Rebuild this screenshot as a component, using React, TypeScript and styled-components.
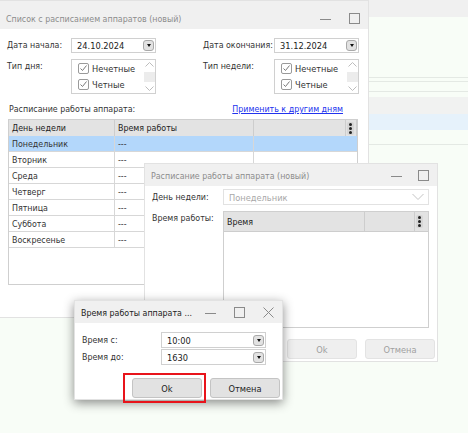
import React from "react";
import styled, { createGlobalStyle } from "styled-components";

const GlobalStyle = createGlobalStyle`
  html, body { margin: 0; padding: 0; }
  body {
    font-family: "DejaVu Sans Condensed", "DejaVu Sans", sans-serif;
    font-size: 8.8px;
    color: #333;
    background: #f8fdf7;
  }
`;

const Desktop = styled.div`
  position: relative;
  width: 468px;
  height: 433px;
  overflow: hidden;
  background: #f8fdf7;
`;

/* background application behind the dialogs */
const BackApp = styled.div`
  display: flex;
  flex-direction: column;
`;
const BackHeader = styled.div`
  height: 17px;
  background: #f0f0f0;
`;
const BackStripe = styled.div<{ $h: number; $bg?: string; $line?: boolean }>`
  height: ${(p) => p.$h}px;
  background: ${(p) => p.$bg || "transparent"};
  border-bottom: ${(p) => (p.$line ? "1px solid #e4e9e4" : "none")};
`;

/* windows */
const Window = styled.div<{ $x: number; $y: number; $w: number; $h: number; $shadow?: boolean }>`
  position: absolute;
  left: ${(p) => p.$x}px;
  top: ${(p) => p.$y}px;
  width: ${(p) => p.$w}px;
  height: ${(p) => p.$h}px;
  background: #fff;
  border: 1px solid #e2e2e2;
  box-sizing: border-box;
  display: flex;
  flex-direction: column;
  box-shadow: ${(p) => (p.$shadow ? "0 3px 10px rgba(0,0,0,0.45)" : "none")};
`;
const TitleBar = styled.div<{ $h: number; $muted?: boolean }>`
  height: ${(p) => p.$h}px;
  flex: none;
  background: #f0f0f0;
  display: flex;
  align-items: flex-end;
  justify-content: space-between;
  padding: 0 8px 5px 6px;
  box-sizing: border-box;
  color: ${(p) => (p.$muted ? "#8c8c8c" : "#222")};
`;
const TitleText = styled.span`
  white-space: nowrap;
`;
const TitleButtons = styled.div<{ $gap: number }>`
  display: flex;
  align-items: center;
  gap: ${(p) => p.$gap}px;
`;

const Minimize = () => (
  <svg width="11" height="11" viewBox="0 0 11 11">
    <path d="M0 6.5h11" stroke="#8a8a8a" strokeWidth="1" />
  </svg>
);
const Maximize = () => (
  <svg width="11" height="11" viewBox="0 0 11 11">
    <rect x="0.5" y="0.5" width="10" height="10" fill="none" stroke="#8a8a8a" />
  </svg>
);
const Close = () => (
  <svg width="11" height="11" viewBox="0 0 11 11">
    <path d="M0.5 0.5l10 10M10.5 0.5l-10 10" stroke="#8a8a8a" />
  </svg>
);

/* form parts */
const Label = styled.div<{ $lh?: number }>`
  line-height: ${(p) => p.$lh || 15}px;
  white-space: nowrap;
  color: #333;
`;
const Field = styled.div<{ $h?: number; $disabled?: boolean }>`
  height: ${(p) => p.$h || 15}px;
  border: 1px solid ${(p) => (p.$disabled ? "#e2e2e2" : "#d0d0d0")};
  box-sizing: border-box;
  display: flex;
  align-items: center;
  justify-content: space-between;
  padding: 0 1px 0 5px;
  background: #fff;
  font-size: 9.2px;
  color: ${(p) => (p.$disabled ? "#a8a8a8" : "#222")};
  white-space: nowrap;
`;
const DropButton = styled.span`
  width: 11px;
  height: 11px;
  border: 1px solid #a9a9a9;
  border-radius: 3px;
  background: #e2e2e2;
  box-sizing: border-box;
  display: flex;
  align-items: center;
  justify-content: center;
  &::after {
    content: "";
    border-left: 2.5px solid transparent;
    border-right: 2.5px solid transparent;
    border-top: 3px solid #111;
  }
`;
const Chevron = () => (
  <svg width="12" height="8" viewBox="0 0 12 8" style={{ marginRight: 3 }}>
    <path d="M0.5 1l5.5 5.5L11.5 1" fill="none" stroke="#c4c4c4" />
  </svg>
);

const CheckListBox = styled.div`
  height: 35px;
  border: 1px solid #d0d0d0;
  box-sizing: border-box;
  display: flex;
`;
const CheckItems = styled.div`
  flex: 1;
  display: flex;
  flex-direction: column;
  justify-content: space-around;
  padding-left: 6px;
`;
const CheckRow = styled.div`
  display: flex;
  align-items: center;
  gap: 3px;
  font-size: 9.2px;
  color: #333;
`;
const CheckBox = styled.span`
  width: 11px;
  height: 11px;
  border: 1px solid #9a9a9a;
  border-radius: 2px;
  box-sizing: border-box;
  display: flex;
  align-items: center;
  justify-content: center;
`;
const ScrollTrack = styled.div`
  width: 12px;
  display: flex;
  flex-direction: column;
  align-items: center;
  justify-content: space-between;
  padding: 2px 0;
`;
const ScrollThumb = styled.div`
  width: 11px;
  height: 10px;
  background: #ececec;
`;

const Tick = () => (
  <svg width="9" height="9" viewBox="0 0 9 9">
    <path d="M1.5 4.5l2 2L7.5 1.5" fill="none" stroke="#7a7a7a" strokeWidth="1" />
  </svg>
);
const ArrowUp = () => (
  <svg width="9" height="5" viewBox="0 0 9 5">
    <path d="M0.5 4.5l4-4 4 4" fill="none" stroke="#bdbdbd" />
  </svg>
);
const ArrowDown = () => (
  <svg width="9" height="5" viewBox="0 0 9 5">
    <path d="M0.5 0.5l4 4 4-4" fill="none" stroke="#bdbdbd" />
  </svg>
);

const CheckList: React.FC = () => (
  <CheckListBox>
    <CheckItems>
      {["Нечетные", "Четные"].map((t) => (
        <CheckRow key={t}>
          <CheckBox>
            <Tick />
          </CheckBox>
          {t}
        </CheckRow>
      ))}
    </CheckItems>
    <ScrollTrack>
      <ArrowUp />
      <ScrollThumb />
      <ArrowDown />
    </ScrollTrack>
  </CheckListBox>
);

/* grids */
const Grid = styled.div<{ $cols: string; $h: number }>`
  display: grid;
  grid-template-columns: ${(p) => p.$cols};
  grid-auto-rows: 16px;
  align-content: start;
  height: ${(p) => p.$h}px;
  border: 1px solid #cfcfcf;
  box-sizing: border-box;
  background: #fff;
`;
const HeadCell = styled.div<{ $h?: number }>`
  height: ${(p) => p.$h || 17}px;
  background: #e3e3e3;
  border-right: 1px solid #cdcdcd;
  border-bottom: 1px solid #cdcdcd;
  box-sizing: border-box;
  display: flex;
  align-items: center;
  padding-left: 3px;
  color: #222;
  &:last-child {
    border-right: none;
  }
`;
const Cell = styled.div<{ $sel?: boolean; $wide?: boolean }>`
  height: 16px;
  background: ${(p) => (p.$sel ? "#b3d7fb" : "#fff")};
  border-right: ${(p) => (p.$wide ? "none" : "1px solid #d7d7d7")};
  border-bottom: 1px solid #d7d7d7;
  grid-column: ${(p) => (p.$wide ? "span 2" : "auto")};
  box-sizing: border-box;
  display: flex;
  align-items: center;
  padding-left: 3px;
  color: #333;
`;
const MenuDots = styled.span`
  width: 7px;
  height: 13px;
  border-radius: 2px;
  background: #d6d6d6;
  display: flex;
  flex-direction: column;
  align-items: center;
  justify-content: space-evenly;
  margin-left: -2px;
  & > i {
    width: 3px;
    height: 3px;
    border-radius: 50%;
    background: #222;
  }
`;
const Dots = () => (
  <MenuDots>
    <i />
    <i />
    <i />
  </MenuDots>
);

/* window 1 */
const Body1 = styled.div`
  padding: 9px 0 0 7px;
  display: flex;
  flex-direction: column;
`;
const FormGrid = styled.div`
  display: grid;
  grid-template-columns: 64px 85px 47px 71px 85px;
  row-gap: 6px;
`;
const SectionHead = styled.div`
  display: flex;
  justify-content: space-between;
  align-items: center;
  margin: 9px 25px 0 2px;
  line-height: 12px;
`;
const Link = styled.a`
  color: #2233ee;
  text-decoration: underline;
`;
const TableWrap = styled.div`
  margin: 4px 0 0 1px;
  width: 350px;
`;

/* window 2 / 3 */
const DialogBody = styled.div<{ $pt: number; $pl: number; $pr: number }>`
  flex: 1;
  display: flex;
  flex-direction: column;
  padding: ${(p) => p.$pt}px ${(p) => p.$pr}px 0 ${(p) => p.$pl}px;
`;
const FormRow = styled.div<{ $label: number; $mt?: number }>`
  display: grid;
  grid-template-columns: ${(p) => p.$label}px 1fr;
  align-items: start;
  margin-top: ${(p) => p.$mt || 0}px;
`;
const ButtonRow = styled.div<{ $mt: number; $mr: number }>`
  display: flex;
  justify-content: flex-end;
  gap: 8px;
  margin-top: ${(p) => p.$mt}px;
  margin-right: ${(p) => p.$mr}px;
`;
const Button = styled.div<{ $disabled?: boolean }>`
  position: relative;
  width: 70px;
  height: 20px;
  border: 1px solid ${(p) => (p.$disabled ? "#e3e3e3" : "#c4c4c4")};
  border-radius: 3px;
  background: ${(p) => (p.$disabled ? "#efefef" : "#e2e2e2")};
  color: ${(p) => (p.$disabled ? "#a0a0a0" : "#222")};
  font-size: 9.2px;
  box-sizing: border-box;
  display: flex;
  align-items: center;
  justify-content: center;
`;
const Highlight = styled.div`
  position: absolute;
  left: -10px;
  top: -6px;
  width: 83px;
  height: 30px;
  border: 2px solid #e8141b;
  box-sizing: border-box;
  pointer-events: none;
`;

const days = ["Понедельник", "Вторник", "Среда", "Четверг", "Пятница", "Суббота", "Воскресенье"];

const App: React.FC = () => (
  <Desktop>
    <GlobalStyle />
    <BackApp>
      <BackHeader />
      <BackStripe $h={60} $line />
      <BackStripe $h={3} $line />
      <BackStripe $h={9} $line />
      <BackStripe $h={5} />
      <BackStripe $h={17} $bg="#f1f2f1" />
      <BackStripe $h={16} $bg="#e6f2fb" />
      <BackStripe $h={14} $line />
    </BackApp>

    <Window $x={-1} $y={0} $w={370} $h={318}>
      <TitleBar $h={28} $muted>
        <TitleText>Список с расписанием аппаратов (новый)</TitleText>
        <TitleButtons $gap={18}>
          <Minimize />
          <Maximize />
        </TitleButtons>
      </TitleBar>
      <Body1>
        <FormGrid>
          <Label>Дата начала:</Label>
          <Field>
            24.10.2024
            <DropButton />
          </Field>
          <span />
          <Label>Дата окончания:</Label>
          <Field>
            31.12.2024
            <DropButton />
          </Field>
          <Label>Тип дня:</Label>
          <CheckList />
          <span />
          <Label>Тип недели:</Label>
          <CheckList />
        </FormGrid>
        <SectionHead>
          <span>Расписание работы аппарата:</span>
          <Link>Применить к другим дням</Link>
        </SectionHead>
        <TableWrap>
          <Grid $cols="106px 139px 92px 11px" $h={166}>
            <HeadCell>День недели</HeadCell>
            <HeadCell>Время работы</HeadCell>
            <HeadCell />
            <HeadCell>
              <Dots />
            </HeadCell>
            {days.map((d, i) => (
              <React.Fragment key={d}>
                <Cell $sel={i === 0}>{d}</Cell>
                <Cell $sel={i === 0}>---</Cell>
                <Cell $sel={i === 0} $wide />
              </React.Fragment>
            ))}
          </Grid>
        </TableWrap>
      </Body1>
    </Window>

    <Window $x={144} $y={163} $w={294} $h={199}>
      <TitleBar $h={22} $muted>
        <TitleText>Расписание работы аппарата (новый)</TitleText>
        <TitleButtons $gap={16}>
          <Minimize />
          <Maximize />
        </TitleButtons>
      </TitleBar>
      <DialogBody $pt={3} $pl={7} $pr={8}>
        <FormRow $label={71}>
          <Label $lh={16}>День недели:</Label>
          <Field $h={16} $disabled>
            Понедельник
            <Chevron />
          </Field>
        </FormRow>
        <FormRow $label={71} $mt={6}>
          <Label>Время работы:</Label>
          <Grid $cols="141px 1fr 13px" $h={117}>
            <HeadCell $h={20}>Время</HeadCell>
            <HeadCell $h={20} />
            <HeadCell $h={20}>
              <Dots />
            </HeadCell>
          </Grid>
        </FormRow>
        <ButtonRow $mt={11} $mr={-6}>
          <Button $disabled>Ok</Button>
          <Button $disabled>Отмена</Button>
        </ButtonRow>
      </DialogBody>
    </Window>

    <Window $x={74} $y={300} $w={209} $h={100} $shadow>
      <TitleBar $h={22}>
        <TitleText>Время работы аппарата ...</TitleText>
        <TitleButtons $gap={18}>
          <Minimize />
          <Maximize />
          <Close />
        </TitleButtons>
      </TitleBar>
      <DialogBody $pt={9} $pl={7} $pr={16}>
        <FormRow $label={79}>
          <Label $lh={16}>Время с:</Label>
          <Field $h={16}>
            10:00
            <DropButton />
          </Field>
        </FormRow>
        <FormRow $label={79} $mt={1}>
          <Label $lh={16}>Время до:</Label>
          <Field $h={16}>
            1630
            <DropButton />
          </Field>
        </FormRow>
        <ButtonRow $mt={13} $mr={-14}>
          <Button>
            Ok
            <Highlight />
          </Button>
          <Button>Отмена</Button>
        </ButtonRow>
      </DialogBody>
    </Window>
  </Desktop>
);

export default App;
